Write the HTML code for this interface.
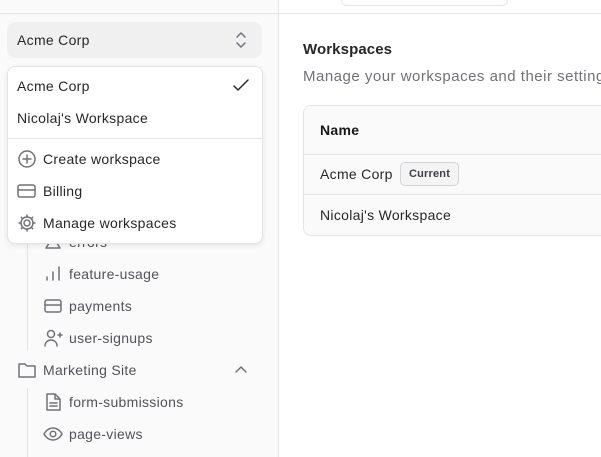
<!DOCTYPE html>
<html><head><style>
*{box-sizing:border-box;margin:0;padding:0}
body{width:601px;height:457px;overflow:hidden;font-family:"Liberation Sans",sans-serif;font-size:14px;color:#27272a;background:#fff;position:relative;letter-spacing:0.3px}
.sb{position:absolute;left:0;top:0;width:279px;height:457px;background:#fafafa;border-right:1px solid #e4e4e7}
.topline{position:absolute;left:0;top:13px;width:601px;height:1px;background:#e4e4e7}
.search{position:absolute;left:341px;top:-10px;width:167px;height:16px;border:1px solid #e4e4e7;border-radius:6px;background:#fff}
.t{position:absolute;white-space:nowrap}
svg{position:absolute;fill:none;stroke:#71717a;stroke-width:1.5;stroke-linecap:round;stroke-linejoin:round}
.sel{position:absolute;left:7px;top:22px;width:255px;height:36px;background:#f0f0f1;border-radius:8px}
.dd{position:absolute;left:7px;top:66px;width:256px;height:178px;background:#fff;border:1px solid #e4e4e7;border-radius:8px;box-shadow:0 2px 6px rgba(0,0,0,.08)}
.tl{position:absolute;left:27px;width:1px;background:#e4e4e7}
.card{position:absolute;left:303px;top:105px;width:310px;height:131px;border:1px solid #e4e4e7;border-radius:8px;background:#fafafa}
.hr{position:absolute;left:0;width:100%;height:1px;background:#e4e4e7}
.badge{position:absolute;left:400px;top:162px;width:59px;height:24px;border:1px solid #d4d4d8;border-radius:5px;background:#f4f4f5;font-size:11px;font-weight:bold;color:#3f3f46;text-align:center;line-height:22px;letter-spacing:0.2px}
</style></head><body>
<div class="sb"></div>
<div class="topline"></div>
<div class="search"></div>
<div class="tl" style="top:230px;height:120px"></div>
<div class="tl" style="top:388px;height:69px"></div>

<svg style="left:44px;top:235px" width="18" height="14" viewBox="0 0 18 14"><path d="M9 2L16 13H2Z"/></svg>
<div class="t" style="left:69px;top:234px;color:#52525b">errors</div>
<svg style="left:44px;top:265px" width="18" height="18" viewBox="0 0 18 18"><path d="M3 15v-3M9 15V7M15 15V2"/></svg>
<div class="t" style="left:69px;top:266px;color:#52525b">feature-usage</div>
<svg style="left:43px;top:297px" width="20" height="18" viewBox="0 0 20 18"><rect x="2" y="3" width="16" height="12" rx="2"/><path d="M2 8h16"/></svg>
<div class="t" style="left:69px;top:298px;color:#52525b">payments</div>
<svg style="left:43px;top:329px" width="20" height="18" viewBox="0 0 20 18"><circle cx="8" cy="5" r="3.5"/><path d="M2 17c0-4 3-6 6-6s6 2 6 6M15 6h4M17 4v4"/></svg>
<div class="t" style="left:69px;top:330px;color:#52525b">user-signups</div>
<svg style="left:17px;top:361px" width="20" height="18" viewBox="0 0 20 18"><path d="M2 3h6l2 2h8v11H2Z"/></svg>
<div class="t" style="left:43px;top:362px;color:#52525b">Marketing Site</div>
<svg style="left:234px;top:364px" width="14" height="10" viewBox="0 0 14 10"><path d="M2 8l5-5 5 5"/></svg>
<svg style="left:44px;top:392px" width="18" height="20" viewBox="0 0 18 20"><path d="M3 2h8l5 5v11H3Z M11 2v5h5 M6 11h7M6 14h7"/></svg>
<div class="t" style="left:69px;top:394px;color:#52525b">form-submissions</div>
<svg style="left:43px;top:426px" width="20" height="16" viewBox="0 0 20 16"><path d="M1 8s3-6 9-6 9 6 9 6-3 6-9 6-9-6-9-6Z"/><circle cx="10" cy="8" r="2.8"/></svg>
<div class="t" style="left:69px;top:426px;color:#52525b">page-views</div>

<div class="sel"></div>
<div class="t" style="left:17px;top:32px;font-weight:500">Acme Corp</div>
<svg style="left:234px;top:30px" width="14" height="20" viewBox="0 0 14 20"><path d="M3 7l4-4 4 4M3 13l4 4 4-4"/></svg>

<div class="dd">
<div class="hr" style="top:71px"></div>
</div>
<div class="t" style="left:17px;top:78px">Acme Corp</div>
<svg style="left:232px;top:78px;stroke:#27272a" width="18" height="16" viewBox="0 0 18 16"><path d="M2 8l4 4 10-10"/></svg>
<div class="t" style="left:17px;top:110px">Nicolaj's Workspace</div>
<svg style="left:17px;top:149px" width="20" height="20" viewBox="0 0 20 20"><circle cx="10" cy="10" r="8"/><path d="M10 6v8M6 10h8"/></svg>
<div class="t" style="left:43px;top:151px">Create workspace</div>
<svg style="left:17px;top:182px" width="20" height="18" viewBox="0 0 20 18"><rect x="1" y="3" width="17" height="12" rx="2"/><path d="M1 8h17"/></svg>
<div class="t" style="left:43px;top:183px">Billing</div>
<svg style="left:17px;top:213px" width="20" height="20" viewBox="0 0 20 20"><circle cx="10" cy="10" r="3"/><path d="M10 2v2M10 16v2M2 10h2M16 10h2M4.3 4.3l1.4 1.4M14.3 14.3l1.4 1.4M4.3 15.7l1.4-1.4M14.3 5.7l1.4-1.4"/><circle cx="10" cy="10" r="6"/></svg>
<div class="t" style="left:43px;top:215px">Manage workspaces</div>

<div class="t" style="left:303px;top:41px;font-size:15px;font-weight:bold;color:#27272a;letter-spacing:0.1px">Workspaces</div>
<div class="t" style="left:303px;top:68px;font-size:15px;color:#71717a;letter-spacing:0.5px">Manage your workspaces and their settings</div>
<div class="card">
<div class="hr" style="top:48px"></div>
<div class="hr" style="top:88px"></div>
</div>
<div class="t" style="left:320px;top:122px;font-weight:bold;color:#18181b">Name</div>
<div class="t" style="left:320px;top:166px">Acme Corp</div>
<div class="badge">Current</div>
<div class="t" style="left:320px;top:207px">Nicolaj's Workspace</div>
</body></html>
